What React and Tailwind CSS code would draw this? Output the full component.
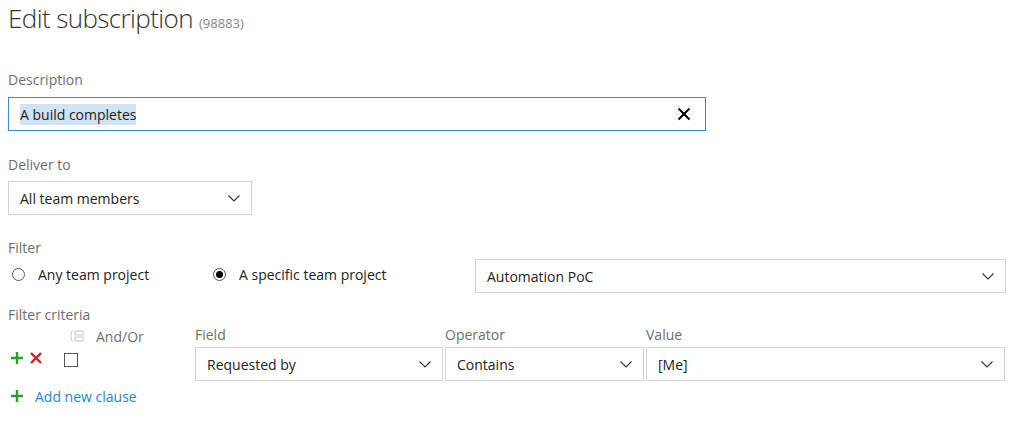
import React from 'react';

const font = { fontFamily: '"Open Sans", "Noto Sans", sans-serif' };

function Chevron() {
  return (
    <svg width="14" height="8" viewBox="0 0 14 8" className="shrink-0">
      <path d="M1.5 1.5l5.5 5.5 5.5-5.5" fill="none" stroke="#333" strokeWidth="1.1" />
    </svg>
  );
}

function Dropdown({ value, className }) {
  return (
    <div className={`flex items-center justify-between h-[34px] border border-[#d4d4d4] bg-white pl-[11px] pr-[10px] ${className}`}>
      <span className="text-[14px] text-[#222]">{value}</span>
      <Chevron />
    </div>
  );
}

function Label({ children, className = '' }) {
  return <div className={`text-[14px] text-[#6e6e6e] leading-[20px] ${className}`}>{children}</div>;
}

function Radio({ checked, label }) {
  return (
    <label className="flex items-center gap-[13px]">
      <span className="w-[13px] h-[13px] rounded-full border border-[#555] flex items-center justify-center">
        {checked && <span className="w-[7px] h-[7px] rounded-full bg-black" />}
      </span>
      <span className="text-[14px] text-[#222]">{label}</span>
    </label>
  );
}

function Plus() {
  return (
    <svg width="14" height="14" viewBox="0 0 14 14" className="shrink-0">
      <path d="M7 1v12M1 7h12" stroke="#2e9a2e" strokeWidth="2.4" />
    </svg>
  );
}

export default function App() {
  return (
    <div style={font} className="w-[1024px] h-[435px] bg-white px-[8px] pt-[2px] overflow-hidden">
      <h1 className="flex items-baseline gap-[6px] h-[36px]">
        <span className="text-[26px] font-light tracking-[-0.6px] text-[#333] leading-[32px]">Edit subscription</span>
        <span className="text-[13px] text-[#888]">(98883)</span>
      </h1>

      <Label className="mt-[32px]">Description</Label>
      <div className="mt-[7px] w-[698px] h-[34px] border border-[#2f8fdd] flex items-center justify-between pl-[11px] pr-[14px]">
        <span className="text-[14px] text-[#222] bg-[#cfe3f6]">A build completes</span>
        <svg width="14" height="14" viewBox="0 0 14 14">
          <path d="M1.5 1.5l11 11M12.5 1.5l-11 11" stroke="#000" strokeWidth="2" />
        </svg>
      </div>

      <Label className="mt-[24px]">Deliver to</Label>
      <Dropdown value="All team members" className="mt-[6px] w-[244px]" />

      <Label className="mt-[23px]">Filter</Label>
      <div className="flex items-center mt-[1px]">
        <div className="flex items-center w-[467px] -mt-[3px]">
          <div className="pl-[4px] w-[205px]">
            <Radio label="Any team project" />
          </div>
          <Radio checked label="A specific team project" />
        </div>
        <Dropdown value="Automation PoC" className="w-[531px]" />
      </div>

      <Label className="mt-[12px]">Filter criteria</Label>
      <div className="flex items-start">
        <div className="w-[187px] shrink-0">
          <div className="flex items-center h-[22px] pl-[62px] gap-[12px]">
            <svg width="14" height="14" viewBox="0 0 14 14">
              <path d="M3 1.5C1.5 1.5 1.5 3 1.5 4v1.5L0.5 7l1 1.5V10c0 1 0 2.5 1.5 2.5" fill="none" stroke="#c8c8c8" strokeWidth="1" />
              <rect x="5" y="2" width="8" height="4" fill="none" stroke="#c8c8c8" strokeWidth="1" />
              <rect x="5" y="8" width="8" height="4" fill="none" stroke="#c8c8c8" strokeWidth="1" />
            </svg>
            <span className="text-[14px] text-[#6e6e6e]">And/Or</span>
          </div>
          <div className="flex items-center h-[22px] pl-[2px]">
            <Plus />
            <svg width="14" height="14" viewBox="0 0 14 14" className="ml-[5px] shrink-0">
              <path d="M2 2l10 10M12 2L2 12" stroke="#e11919" strokeWidth="2.4" />
            </svg>
            <span className="ml-[21px] mt-[3px] w-[14px] h-[14px] border border-[#555]" />
          </div>
        </div>
        <div className="flex">
          <div className="w-[250px]">
            <Label className="h-[22px]">Field</Label>
            <Dropdown value="Requested by" className="w-[248px]" />
          </div>
          <div className="w-[201px]">
            <Label className="h-[22px]">Operator</Label>
            <Dropdown value="Contains" className="w-[199px]" />
          </div>
          <div className="w-[359px]">
            <Label className="h-[22px]">Value</Label>
            <Dropdown value="[Me]" className="w-[359px]" />
          </div>
        </div>
      </div>
      <div className="flex items-center mt-[5px] h-[20px] pl-[2px] gap-[11px]">
        <Plus />
        <span className="text-[14px] text-[#1e86d8]">Add new clause</span>
      </div>
    </div>
  );
}
